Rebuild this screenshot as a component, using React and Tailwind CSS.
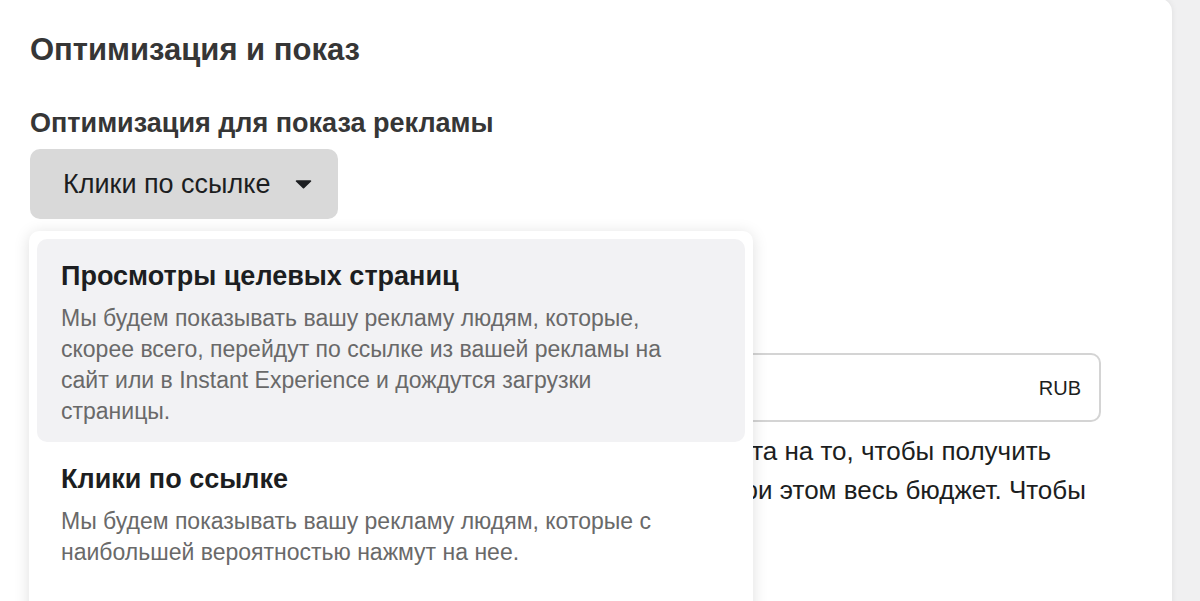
import React from "react";

const font = { fontFamily: '"Liberation Sans", Arial, sans-serif' };

function Caret() {
  return (
    <svg width="17" height="10" viewBox="0 0 17 10" className="shrink-0">
      <path d="M1.5 1.2h14a.8.8 0 0 1 .6 1.3L9.1 9.2a.8.8 0 0 1-1.2 0L.9 2.5a.8.8 0 0 1 .6-1.3z" fill="#1c1e21" />
    </svg>
  );
}

const options = [
  {
    title: "Просмотры целевых страниц",
    lines: [
      "Мы будем показывать вашу рекламу людям, которые,",
      "скорее всего, перейдут по ссылке из вашей рекламы на",
      "сайт или в Instant Experience и дождутся загрузки",
      "страницы.",
    ],
    active: true,
  },
  {
    title: "Клики по ссылке",
    lines: [
      "Мы будем показывать вашу рекламу людям, которые с",
      "наибольшей вероятностью нажмут на нее.",
    ],
  },
];

export default function App() {
  return (
    <div className="h-[601px] w-full overflow-hidden bg-[#f0f0f1]" style={font}>
      <div className="relative -mt-[2px] -ml-[12px] h-[700px] w-[1184px] rounded-[14px] bg-white pl-[42px] pr-[71px] pt-[34px] shadow-[0_0_6px_rgba(0,0,0,0.08)]">
        <h2 className="text-[31px] font-bold leading-[36px] text-[#363636]">Оптимизация и показ</h2>
        <h3 className="mt-[39px] text-[27px] font-bold leading-[32px] text-[#363636]">
          Оптимизация для показа рекламы
        </h3>
        <button className="mt-[10px] flex h-[70px] w-[308px] items-center gap-[25px] rounded-[10px] bg-[#d9d9d9] pl-[33px] text-[27px] text-[#1c1e21]">
          Клики по ссылке
          <Caret />
        </button>

        {/* budget field, mostly covered by the open menu */}
        <div className="mt-[134px] flex h-[69px] items-center justify-end rounded-[10px] border-2 border-[#d4d4d4] pr-[18px] text-[20px] text-[#1c1e21]">
          RUB
        </div>
        <p className="mt-[10px] whitespace-nowrap indent-[10px] text-[26px] leading-[39px] text-[#1c1e21]">
          Мы будем стремиться потратить всю сумму вашего бюджета на то, чтобы получить
          <br />
          наибольшее количество кликов по ссылке, израсходовав при этом весь бюджет. Чтобы
        </p>

        <div className="absolute left-[41px] top-[233px] w-[724px] rounded-[10px] bg-white px-[8px] pt-[8px] pb-[60px] shadow-[0_2px_16px_rgba(0,0,0,0.13)]">
          {options.map((o) => (
            <div
              key={o.title}
              className={`rounded-[10px] px-[24px] pt-[21px] pb-[15px] ${o.active ? "bg-[#f2f2f4]" : ""}`}
            >
              <div className="text-[27px] font-bold leading-[32px] text-[#1c1e21]">{o.title}</div>
              <p className="mt-[11px] text-[23px] leading-[31px] text-[#696969]">
                {o.lines.map((l, i) => (
                  <React.Fragment key={i}>
                    {i > 0 && <br />}
                    {l}
                  </React.Fragment>
                ))}
              </p>
            </div>
          ))}
        </div>
      </div>
    </div>
  );
}
